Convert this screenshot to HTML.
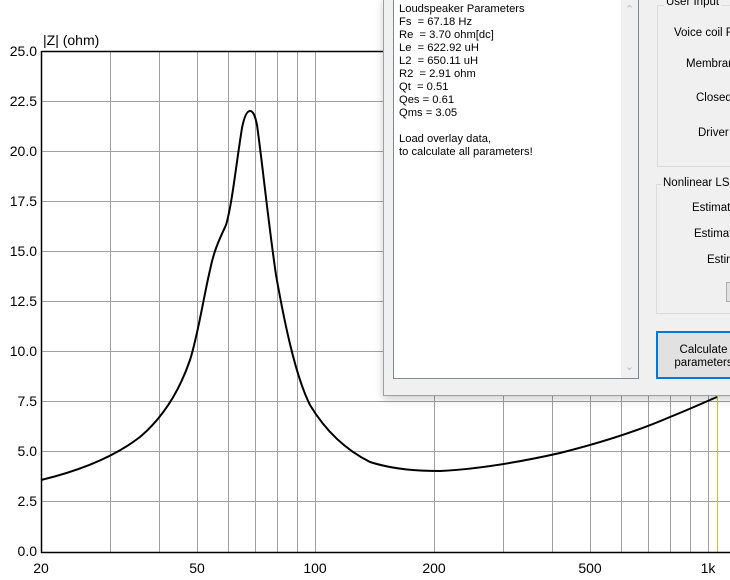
<!DOCTYPE html>
<html><head><meta charset="utf-8"><style>
body{margin:0;width:730px;height:580px;overflow:hidden;background:#fff;font-family:"Liberation Sans",Arial,sans-serif;position:relative}
.yl{position:absolute;right:693px;font-size:14px;color:#000;line-height:14px}
.xl{position:absolute;top:561px;font-size:14px;line-height:14px;transform:translateX(-50%)}
.win{position:absolute;left:383px;top:-2px;width:360px;height:396px;background:#f0f0f0;border:1px solid #a0a0a0;box-shadow:0 3px 8px rgba(0,0,0,0.2)}
.tb{position:absolute;left:9px;top:0;width:246px;height:380px;background:#fff;border:1px solid #828790;box-sizing:border-box;font-size:11.2px;line-height:13px;padding:3px 0 0 5px;color:#000}
.sb{position:absolute;right:0;top:0;width:17px;height:100%;background:#f0f0f0;color:#bbb;font-size:11px;text-align:center}
.gb{position:absolute;border:1px solid #dcdcdc}
.gt{position:absolute;background:#f0f0f0;font-size:11.5px;padding:0 2px}
.lab{position:absolute;font-size:11.5px;white-space:nowrap}
</style></head><body>
<svg width="730" height="580" style="position:absolute;left:0;top:0">
<g stroke="#a0a0a0" stroke-width="1">
<line x1="41" y1="101.5" x2="730" y2="101.5"/><line x1="41" y1="151.5" x2="730" y2="151.5"/><line x1="41" y1="201.5" x2="730" y2="201.5"/><line x1="41" y1="251.5" x2="730" y2="251.5"/><line x1="41" y1="301.5" x2="730" y2="301.5"/><line x1="41" y1="351.5" x2="730" y2="351.5"/><line x1="41" y1="401.5" x2="730" y2="401.5"/><line x1="41" y1="451.5" x2="730" y2="451.5"/><line x1="41" y1="501.5" x2="730" y2="501.5"/>
<line x1="110.5" y1="51" x2="110.5" y2="552"/><line x1="159.5" y1="51" x2="159.5" y2="552"/><line x1="197.5" y1="51" x2="197.5" y2="552"/><line x1="228.5" y1="51" x2="228.5" y2="552"/><line x1="255.5" y1="51" x2="255.5" y2="552"/><line x1="277.5" y1="51" x2="277.5" y2="552"/><line x1="297.5" y1="51" x2="297.5" y2="552"/><line x1="315.5" y1="51" x2="315.5" y2="552"/>
<line x1="434.5" y1="51" x2="434.5" y2="552"/><line x1="503.5" y1="51" x2="503.5" y2="552"/><line x1="552.5" y1="51" x2="552.5" y2="552"/><line x1="590.5" y1="51" x2="590.5" y2="552"/><line x1="621.5" y1="51" x2="621.5" y2="552"/><line x1="648.5" y1="51" x2="648.5" y2="552"/><line x1="670.5" y1="51" x2="670.5" y2="552"/><line x1="690.5" y1="51" x2="690.5" y2="552"/><line x1="708.5" y1="51" x2="708.5" y2="552"/>
</g>
<line x1="717.5" y1="51" x2="717.5" y2="552" stroke="#c8c040" stroke-width="1"/>
<path d="M41.5 51.5 H730 M41.5 51 V552.5 H730" stroke="#000" stroke-width="1.5" fill="none"/>
<path fill="none" stroke="#000" stroke-width="2" stroke-linejoin="round" d="M41,480 C70,473 110,460 140,437 C160,420 178,395 190,360 C198,335 203,300 210,270 C214,250 220,238 226,225 C232,205 236,165 242,128 C245,113 248,111 250,111 C253,111 255,115 257,125 C262,160 268,220 276,275 C284,320 295,375 310,405 C322,425 340,447 370,462 C395,470 420,471 440,471 C480,469 520,462 560,453 C600,443 640,430 670,417 C690,409 705,402 717,397"/>
</svg>
<div style="position:absolute;left:43px;top:32px;font-size:14px">|Z| (ohm)</div>
<div class="yl" style="top:44px">25.0</div><div class="yl" style="top:94px">22.5</div><div class="yl" style="top:144px">20.0</div><div class="yl" style="top:194px">17.5</div><div class="yl" style="top:244px">15.0</div><div class="yl" style="top:294px">12.5</div><div class="yl" style="top:344px">10.0</div><div class="yl" style="top:394px">7.5</div><div class="yl" style="top:444px">5.0</div><div class="yl" style="top:494px">2.5</div><div class="yl" style="top:544px">0.0</div>
<div class="xl" style="left:41px">20</div><div class="xl" style="left:197px">50</div><div class="xl" style="left:315px">100</div><div class="xl" style="left:434px">200</div><div class="xl" style="left:590px">500</div><div class="xl" style="left:708px">1k</div>
<div class="win">
<div class="tb">Loudspeaker Parameters<br>Fs&nbsp; = 67.18 Hz<br>Re&nbsp; = 3.70 ohm[dc]<br>Le&nbsp; = 622.92 uH<br>L2&nbsp; = 650.11 uH<br>R2&nbsp; = 2.91 ohm<br>Qt&nbsp; = 0.51<br>Qes = 0.61<br>Qms = 3.05<br><br>Load overlay data,<br>to calculate all parameters!
<div class="sb"><div style="margin-top:4px">&#8963;</div><div style="position:absolute;bottom:4px;width:17px">&#8964;</div></div></div>
<div class="gb" style="left:273px;top:6px;width:90px;height:160px"></div>
<div class="gt" style="left:280px;top:-3px">User Input</div>
<div class="lab" style="left:290px;top:28px">Voice coil Re</div>
<div class="lab" style="left:302px;top:59px">Membran</div>
<div class="lab" style="left:312px;top:93px">Closed</div>
<div class="lab" style="left:314px;top:128px">Driver</div>
<div class="gb" style="left:272px;top:185px;width:90px;height:128px"></div>
<div class="gt" style="left:277px;top:178px">Nonlinear LSE</div>
<div class="lab" style="left:308px;top:203px">Estimate</div>
<div class="lab" style="left:310px;top:229px">Estimat</div>
<div class="lab" style="left:323px;top:255px">Estim</div>
<div style="position:absolute;left:342px;top:283px;width:20px;height:18px;border:1px solid #adadad;background:#e1e1e1"></div>
<div style="position:absolute;left:272px;top:332px;height:48px;border:2px solid #0078d7;background:#e1e1e1;box-sizing:border-box;font-size:11.5px;line-height:13px;padding:11px 0 0 5px;text-align:center;width:90px">Calculate<br>parameters</div>
</div>
</body></html>
